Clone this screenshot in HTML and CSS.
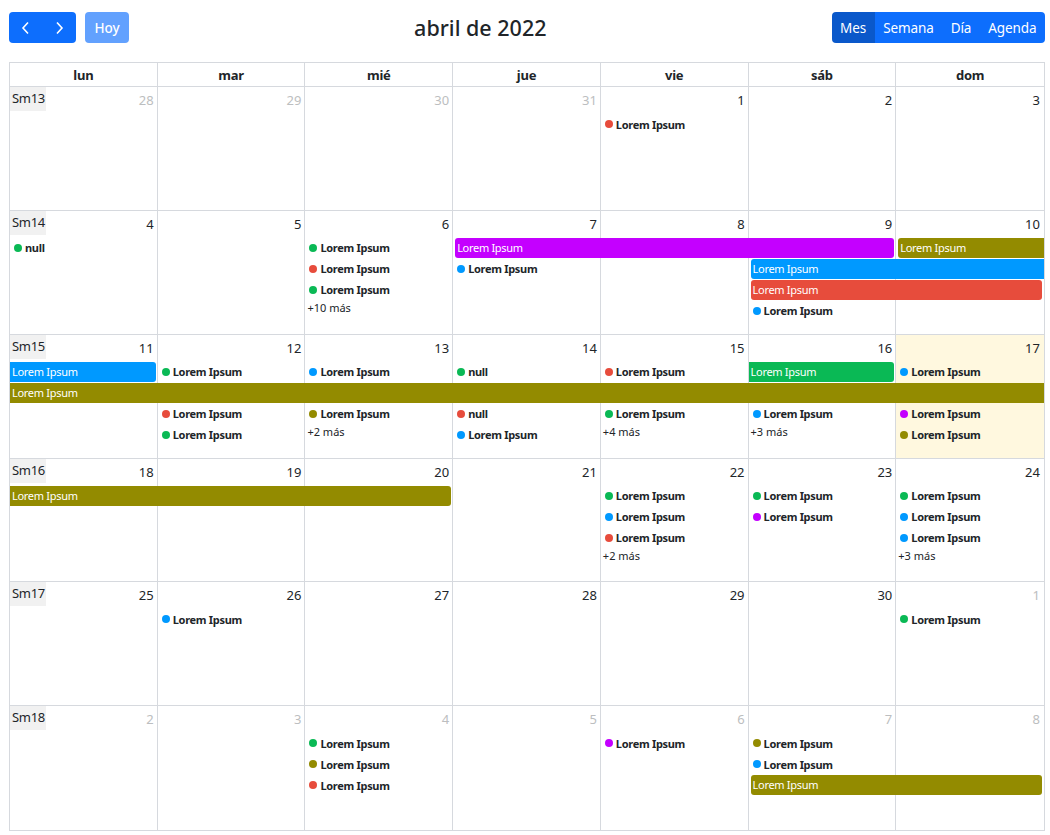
FILE: index.html
```html
<!DOCTYPE html>
<html lang="es">
<head>
<meta charset="utf-8">
<title>Calendario</title>
<link rel="stylesheet" href="styles.css">
</head>
<body>
<div class="cal">
  <div class="toolbar">
    <div class="tb-left">
      <div class="btn-group">
        <button class="btn nav"><svg width="10" height="14" viewBox="0 0 10 14"><path d="M7 1.5L2 7l5 5.5" fill="none" stroke="#fff" stroke-width="1.6"/></svg></button>
        <button class="btn nav"><svg width="10" height="14" viewBox="0 0 10 14"><path d="M3 1.5L8 7l-5 5.5" fill="none" stroke="#fff" stroke-width="1.6"/></svg></button>
      </div>
      <button class="btn disabled">Hoy</button>
    </div>
    <h2 class="title">abril de 2022</h2>
    <div class="btn-group">
      <button class="btn active">Mes</button>
      <button class="btn">Semana</button>
      <button class="btn">Día</button>
      <button class="btn">Agenda</button>
    </div>
  </div>

  <div class="grid">
    <div class="head">
      <div class="th">lun</div><div class="th">mar</div><div class="th">mié</div><div class="th">jue</div><div class="th">vie</div><div class="th">sáb</div><div class="th">dom</div>
    </div>
    <div class="body">

      <!-- week 13 -->
      <div class="week">
        <div class="bg"><div class="day"></div><div class="day"></div><div class="day"></div><div class="day"></div><div class="day"></div><div class="day"></div><div class="day"></div></div>
        <div class="fg">
          <span class="wk">Sm13</span>
          <span class="num c1 other">28</span><span class="num c2 other">29</span><span class="num c3 other">30</span><span class="num c4 other">31</span><span class="num c5">1</span><span class="num c6">2</span><span class="num c7">3</span>
          <a class="ev c5 r1"><i class="dot red"></i>Lorem Ipsum</a>
        </div>
      </div>

      <!-- week 14 -->
      <div class="week">
        <div class="bg"><div class="day"></div><div class="day"></div><div class="day"></div><div class="day"></div><div class="day"></div><div class="day"></div><div class="day"></div></div>
        <div class="fg">
          <span class="wk">Sm14</span>
          <span class="num c1">4</span><span class="num c2">5</span><span class="num c3">6</span><span class="num c4">7</span><span class="num c5">8</span><span class="num c6">9</span><span class="num c7">10</span>
          <a class="ev c1 r1"><i class="dot green"></i>null</a>
          <a class="ev c3 r1"><i class="dot green"></i>Lorem Ipsum</a>
          <a class="ev c3 r2"><i class="dot red"></i>Lorem Ipsum</a>
          <a class="ev c3 r3"><i class="dot green"></i>Lorem Ipsum</a>
          <a class="more c3 r4">+10 más</a>
          <a class="bar c4 s3 r1 purple">Lorem Ipsum</a>
          <a class="bar c7 r1 olive open-r">Lorem Ipsum</a>
          <a class="ev c4 r2"><i class="dot blue"></i>Lorem Ipsum</a>
          <a class="bar c6 s2 r2 blue open-r">Lorem Ipsum</a>
          <a class="bar c6 s2 r3 red">Lorem Ipsum</a>
          <a class="ev c6 r4"><i class="dot blue"></i>Lorem Ipsum</a>
        </div>
      </div>

      <!-- week 15 -->
      <div class="week">
        <div class="bg"><div class="day"></div><div class="day"></div><div class="day"></div><div class="day"></div><div class="day"></div><div class="day"></div><div class="day today"></div></div>
        <div class="fg">
          <span class="wk">Sm15</span>
          <span class="num c1">11</span><span class="num c2">12</span><span class="num c3">13</span><span class="num c4">14</span><span class="num c5">15</span><span class="num c6">16</span><span class="num c7">17</span>
          <a class="bar c1 r1 blue open-l">Lorem Ipsum</a>
          <a class="ev c2 r1"><i class="dot green"></i>Lorem Ipsum</a>
          <a class="ev c3 r1"><i class="dot blue"></i>Lorem Ipsum</a>
          <a class="ev c4 r1"><i class="dot green"></i>null</a>
          <a class="ev c5 r1"><i class="dot red"></i>Lorem Ipsum</a>
          <a class="bar c6 r1 green open-l">Lorem Ipsum</a>
          <a class="ev c7 r1"><i class="dot blue"></i>Lorem Ipsum</a>
          <a class="bar c1 s7 r2 olive open-l open-r">Lorem Ipsum</a>
          <a class="ev c2 r3"><i class="dot red"></i>Lorem Ipsum</a>
          <a class="ev c3 r3"><i class="dot olive"></i>Lorem Ipsum</a>
          <a class="ev c4 r3"><i class="dot red"></i>null</a>
          <a class="ev c5 r3"><i class="dot green"></i>Lorem Ipsum</a>
          <a class="ev c6 r3"><i class="dot blue"></i>Lorem Ipsum</a>
          <a class="ev c7 r3"><i class="dot purple"></i>Lorem Ipsum</a>
          <a class="ev c2 r4"><i class="dot green"></i>Lorem Ipsum</a>
          <a class="more c3 r4">+2 más</a>
          <a class="ev c4 r4"><i class="dot blue"></i>Lorem Ipsum</a>
          <a class="more c5 r4">+4 más</a>
          <a class="more c6 r4">+3 más</a>
          <a class="ev c7 r4"><i class="dot olive"></i>Lorem Ipsum</a>
        </div>
      </div>

      <!-- week 16 -->
      <div class="week">
        <div class="bg"><div class="day"></div><div class="day"></div><div class="day"></div><div class="day"></div><div class="day"></div><div class="day"></div><div class="day"></div></div>
        <div class="fg">
          <span class="wk">Sm16</span>
          <span class="num c1">18</span><span class="num c2">19</span><span class="num c3">20</span><span class="num c4">21</span><span class="num c5">22</span><span class="num c6">23</span><span class="num c7">24</span>
          <a class="bar c1 s3 r1 olive open-l">Lorem Ipsum</a>
          <a class="ev c5 r1"><i class="dot green"></i>Lorem Ipsum</a>
          <a class="ev c5 r2"><i class="dot blue"></i>Lorem Ipsum</a>
          <a class="ev c5 r3"><i class="dot red"></i>Lorem Ipsum</a>
          <a class="more c5 r4">+2 más</a>
          <a class="ev c6 r1"><i class="dot green"></i>Lorem Ipsum</a>
          <a class="ev c6 r2"><i class="dot purple"></i>Lorem Ipsum</a>
          <a class="ev c7 r1"><i class="dot green"></i>Lorem Ipsum</a>
          <a class="ev c7 r2"><i class="dot blue"></i>Lorem Ipsum</a>
          <a class="ev c7 r3"><i class="dot blue"></i>Lorem Ipsum</a>
          <a class="more c7 r4">+3 más</a>
        </div>
      </div>

      <!-- week 17 -->
      <div class="week">
        <div class="bg"><div class="day"></div><div class="day"></div><div class="day"></div><div class="day"></div><div class="day"></div><div class="day"></div><div class="day"></div></div>
        <div class="fg">
          <span class="wk">Sm17</span>
          <span class="num c1">25</span><span class="num c2">26</span><span class="num c3">27</span><span class="num c4">28</span><span class="num c5">29</span><span class="num c6">30</span><span class="num c7 other">1</span>
          <a class="ev c2 r1"><i class="dot blue"></i>Lorem Ipsum</a>
          <a class="ev c7 r1"><i class="dot green"></i>Lorem Ipsum</a>
        </div>
      </div>

      <!-- week 18 -->
      <div class="week">
        <div class="bg"><div class="day"></div><div class="day"></div><div class="day"></div><div class="day"></div><div class="day"></div><div class="day"></div><div class="day"></div></div>
        <div class="fg">
          <span class="wk">Sm18</span>
          <span class="num c1 other">2</span><span class="num c2 other">3</span><span class="num c3 other">4</span><span class="num c4 other">5</span><span class="num c5 other">6</span><span class="num c6 other">7</span><span class="num c7 other">8</span>
          <a class="ev c3 r1"><i class="dot green"></i>Lorem Ipsum</a>
          <a class="ev c3 r2"><i class="dot olive"></i>Lorem Ipsum</a>
          <a class="ev c3 r3"><i class="dot red"></i>Lorem Ipsum</a>
          <a class="ev c5 r1"><i class="dot purple"></i>Lorem Ipsum</a>
          <a class="ev c6 r1"><i class="dot olive"></i>Lorem Ipsum</a>
          <a class="ev c6 r2"><i class="dot blue"></i>Lorem Ipsum</a>
          <a class="bar c6 s2 r3 olive">Lorem Ipsum</a>
        </div>
      </div>

    </div>
  </div>
</div>
</body>
</html>
```

FILE: styles.css
```css
* { box-sizing: border-box; }

body {
  margin: 0;
  background: #fff;
  color: #212529;
  font-family: "Noto Sans", "Open Sans", sans-serif;
  font-size: 14px;
}

.cal {
  width: 1045px;
  padding: 12px 0 0 9px;
}

/* toolbar */
.toolbar {
  display: flex;
  align-items: center;
  justify-content: space-between;
  height: 31px;
  margin-bottom: 19px;
}
.tb-left { display: flex; gap: 9px; }
.btn-group { display: flex; border-radius: 4px; overflow: hidden; }
.btn {
  height: 31px;
  border: 0;
  margin: 0;
  padding: 0 8.5px;
  background: #0d6efd;
  color: #fff;
  font-family: inherit;
  font-size: 13.5px;
  letter-spacing: -0.1px;
  display: flex;
  align-items: center;
  justify-content: center;
}
.btn.nav { width: 33.5px; padding: 0; }
.btn.disabled { background: #62a1fe; border-radius: 4px; width: 44px; padding: 0; font-weight: 500; }
.btn.active { background: #0a58ca; }
.title {
  margin: 0;
  font-size: 21.5px;
  font-weight: 500;
}

/* grid */
.grid {
  width: 1036px;
  border: 1px solid #d6d9de;
}
.head {
  display: grid;
  grid-template-columns: repeat(7, 1fr);
  height: 24px;
  border-bottom: 1px solid #d6d9de;
}
.th {
  border-right: 1px solid #d6d9de;
  text-align: center;
  font-weight: 700;
  font-size: 13px;
  letter-spacing: -0.2px;
  line-height: 24px;
}
.th:last-child { border-right: 0; }

.body {
  display: grid;
  grid-auto-rows: 1fr;
  height: 743px;
}
.week {
  display: grid;
  border-bottom: 1px solid #d6d9de;
}
.week:last-child { border-bottom: 0; }
.bg, .fg { grid-area: 1 / 1; }
.bg {
  display: grid;
  grid-template-columns: repeat(7, 1fr);
}
.day { border-right: 1px solid #d6d9de; }
.day:last-child { border-right: 0; }
.day.today { background: #fff8df; }

.fg {
  display: grid;
  grid-template-columns: repeat(7, 1fr);
  grid-template-rows: 27px repeat(4, 21px);
  align-content: start;
  min-width: 0;
}

.wk {
  grid-column: 1;
  grid-row: 1;
  justify-self: start;
  align-self: start;
  background: #f1f1f1;
  font-size: 13px;
  letter-spacing: -0.3px;
  line-height: 23px;
  padding: 0 1px 0 2px;
  height: 24px;
}
.num {
  grid-row: 1;
  justify-self: end;
  align-self: start;
  padding: 3px 4px 0 0;
  font-size: 13px;
  line-height: 20px;
}
.num.other { color: #bcbec0; }

.c1 { grid-column-start: 1; }
.c2 { grid-column-start: 2; }
.c3 { grid-column-start: 3; }
.c4 { grid-column-start: 4; }
.c5 { grid-column-start: 5; }
.c6 { grid-column-start: 6; }
.c7 { grid-column-start: 7; }
.s2 { grid-column-end: span 2; }
.s3 { grid-column-end: span 3; }
.s7 { grid-column-end: span 7; }
.r1 { grid-row: 2; }
.r2 { grid-row: 3; }
.r3 { grid-row: 4; }
.r4 { grid-row: 5; }

.ev {
  display: flex;
  align-items: center;
  height: 20px;
  margin: 0 2px;
  padding-left: 2px;
  font-size: 11px;
  letter-spacing: -0.3px;
  font-weight: 700;
  color: #212529;
  white-space: nowrap;
  overflow: hidden;
}
.dot {
  width: 8px;
  height: 8px;
  border-radius: 50%;
  margin-right: 3px;
  flex: none;
}
.more {
  align-self: start;
  margin: 0 2px;
  font-size: 11px;
  line-height: 13px;
  color: #212529;
}

.bar {
  height: 20px;
  margin: 0 2px;
  border-radius: 3px;
  color: #fff;
  font-size: 11px;
  letter-spacing: -0.3px;
  line-height: 20px;
  padding-left: 2px;
  white-space: nowrap;
  overflow: hidden;
}
.bar.open-l { margin-left: 0; border-top-left-radius: 0; border-bottom-left-radius: 0; }
.bar.open-r { margin-right: 0; border-top-right-radius: 0; border-bottom-right-radius: 0; }

.purple { background: #c400ff; }
.olive { background: #938b00; }
.blue { background: #0099ff; }
.red { background: #e74c3c; }
.green { background: #0ab955; }
```
